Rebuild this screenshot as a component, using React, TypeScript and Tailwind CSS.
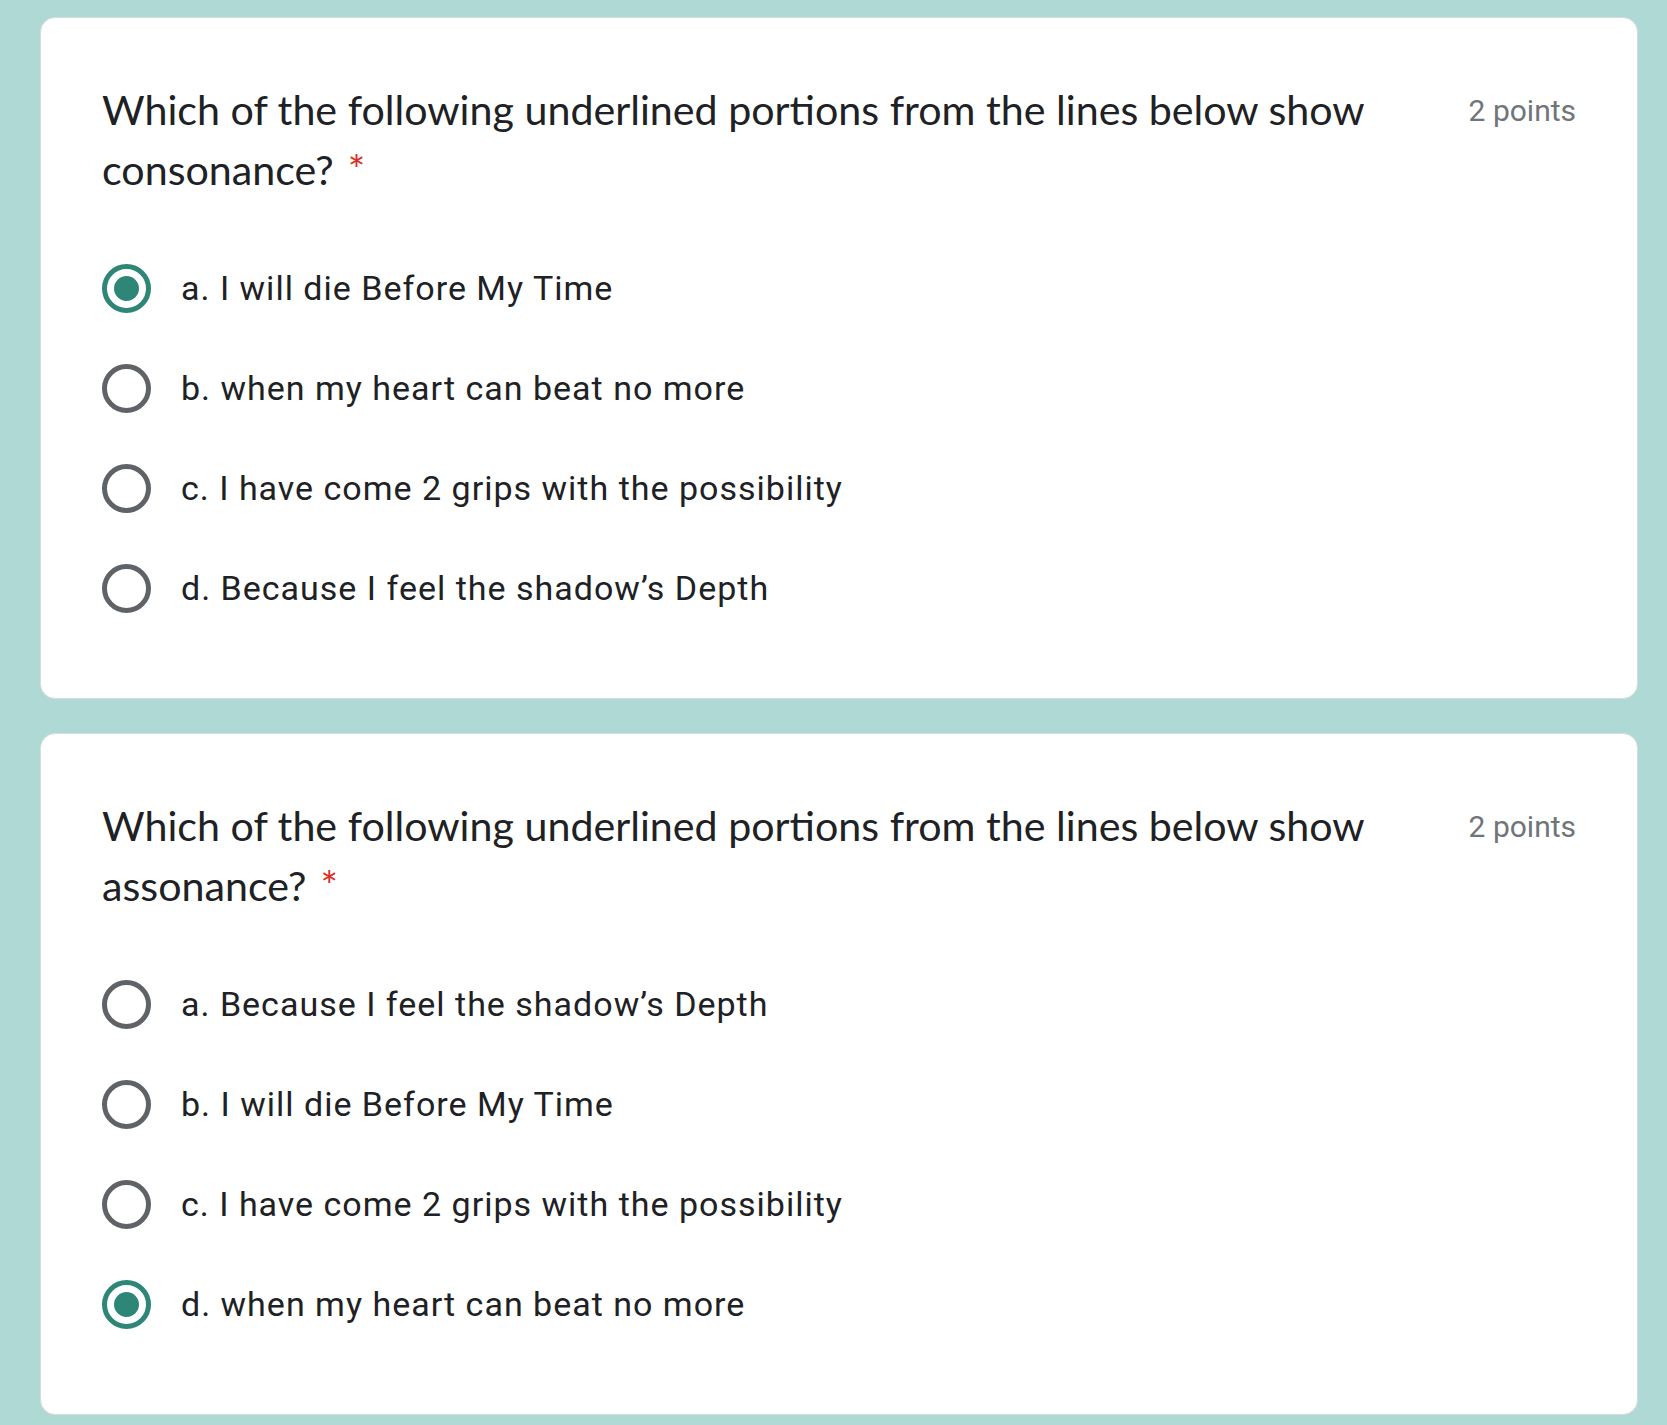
import React from 'react';

type Question = {
  title: string;
  points: string;
  options: string[];
  selected: number;
};

const questions: Question[] = [
  {
    title: 'Which of the following underlined portions from the lines below show consonance?',
    points: '2 points',
    options: [
      'a. I will die Before My Time',
      'b. when my heart can beat no more',
      'c. I have come 2 grips with the possibility',
      'd. Because I feel the shadow’s Depth',
    ],
    selected: 0,
  },
  {
    title: 'Which of the following underlined portions from the lines below show assonance?',
    points: '2 points',
    options: [
      'a. Because I feel the shadow’s Depth',
      'b. I will die Before My Time',
      'c. I have come 2 grips with the possibility',
      'd. when my heart can beat no more',
    ],
    selected: 3,
  },
];

function Radio({ checked }: { checked: boolean }) {
  return (
    <div
      className={`w-[49px] h-[49px] shrink-0 rounded-full border-[5px] flex items-center justify-center ${
        checked ? 'border-[#2e8676]' : 'border-[#5f6368]'
      }`}
    >
      {checked && <div className="w-[25px] h-[25px] rounded-full bg-[#2e8676]" />}
    </div>
  );
}

function QuestionCard({ q }: { q: Question }) {
  return (
    <div className="bg-white rounded-[15px] border border-[#d6dcdb] pt-[61px] pb-[60px] pl-[61px] pr-[61px]">
      {/* Header */}
      <div className="flex items-start">
        <div
          className="flex-1 text-[41.2px] leading-[60px] text-[#202124] pr-[60px]"
          style={{ fontFamily: 'Lato, "Open Sans", sans-serif' }}
        >
          {q.title}
          <span className="text-[#d93025] ml-[14px]">*</span>
        </div>
        <div
          className="text-[30px] leading-[60px] text-[#70757a] pt-[2px] whitespace-nowrap"
          style={{ fontFamily: 'Roboto, Arial, sans-serif' }}
        >
          {q.points}
        </div>
      </div>

      {/* Options */}
      <div className="mt-[39px] flex flex-col">
        {q.options.map((opt, i) => (
          <div key={i} className="h-[100px] flex items-center gap-[30px]">
            <Radio checked={q.selected === i} />
            <span
              className="text-[34px] tracking-[1px] text-[#202124]"
              style={{ fontFamily: 'Roboto, Arial, sans-serif' }}
            >
              {opt}
            </span>
          </div>
        ))}
      </div>
    </div>
  );
}

export default function App() {
  return (
    <div className="min-h-screen bg-[#afd9d5] pt-[17px] pb-[10px] pl-[40px] pr-[29px] flex flex-col gap-[34px]">
      {questions.map((q, i) => (
        <QuestionCard key={i} q={q} />
      ))}
    </div>
  );
}
